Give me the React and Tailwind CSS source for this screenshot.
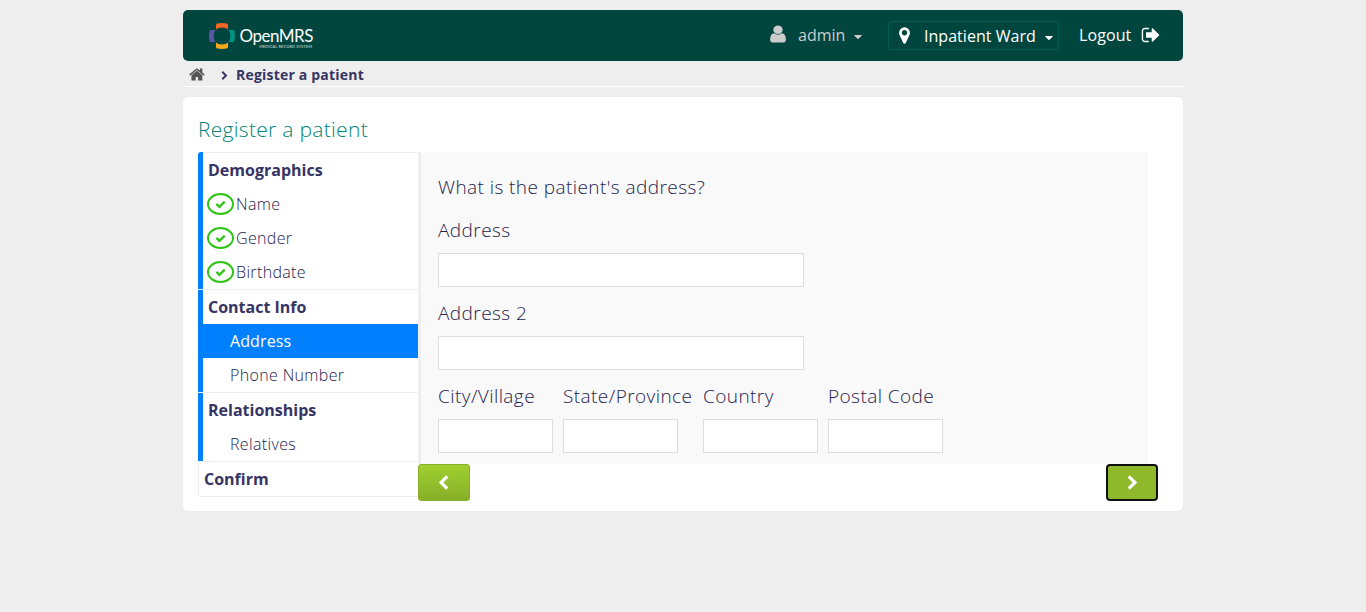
const PATHS = {
  home: "M1408 992v480q0 26-19 45t-45 19h-384v-384h-256v384h-384q-26 0-45-19t-19-45v-480q0-1 .5-3t.5-3l575-474 575 474q1 2 1 6zm223-69l-62 74q-8 9-21 11h-3q-13 0-21-7l-692-577-692 577q-12 8-24 7-13-2-21-11l-62-74q-8-10-7-23.5t11-21.5l719-599q32-26 76-26t76 26l244 204v-195q0-14 9-23t23-9h192q14 0 23 9t9 23v408l219 182q10 8 11 21.5t-7 23.5z",
  marker: "M1152 640q0-106-75-181t-181-75-181 75-75 181 75 181 181 75 181-75 75-181zm256 0q0 109-33 179l-364 774q-16 33-47.5 52t-67.5 19-67.5-19-46.5-52l-365-774q-33-70-33-179 0-212 150-362t362-150 362 150 150 362z",
  user: "M1536 1399q0 109-62.5 187t-150.5 78h-854q-88 0-150.5-78t-62.5-187q0-85 8.5-160.5t31.5-152 58.5-131 94-89 134.5-34.5q131 128 313 128t313-128q76 0 134.5 34.5t94 89 58.5 131 31.5 152 8.5 160.5zm-256-887q0 159-112.5 271.5t-271.5 112.5-271.5-112.5-112.5-271.5 112.5-271.5 271.5-112.5 271.5 112.5 112.5 271.5z",
  check: "M1671 566q0 40-28 68l-724 724-136 136q-28 28-68 28t-68-28l-136-136-362-362q-28-28-28-68t28-68l136-136q28-28 68-28t68 28l294 295 656-657q28-28 68-28t68 28l136 136q28 28 28 68z",
  signout: "M704 1440q0 4 1 20t.5 26.5-3 23.5-10 19.5-20.5 6.5h-320q-119 0-203.5-84.5t-84.5-203.5v-704q0-119 84.5-203.5t203.5-84.5h320q13 0 22.5 9.5t9.5 22.5q0 4 1 20t.5 26.5-3 23.5-10 19.5-20.5 6.5h-320q-66 0-113 47t-47 113v704q0 66 47 113t113 47h312l11.5 1 11.5 3 8 5.5 7 9 2 13.5zm928-544q0 26-19 45l-544 544q-19 19-45 19t-45-19-19-45v-288h-448q-26 0-45-19t-19-45v-384q0-26 19-45t45-19h448v-288q0-26 19-45t45-19 45 19l544 544q19 19 19 45z",
};

function Icon({ name, className }) {
  return (
    <svg viewBox="0 0 1792 1792" preserveAspectRatio="none" fill="currentColor" className={`shrink-0 ${className}`} aria-hidden="true">
      <path d={PATHS[name]} />
    </svg>
  );
}

function Chevron({ right = false, className }) {
  return (
    <svg viewBox="0 0 10 14" fill="none" stroke="currentColor" strokeWidth="3" className={`shrink-0 ${className}`} aria-hidden="true">
      <path d={right ? "M1.5 1.2 7.3 7 1.5 12.8" : "M8.5 1.2 2.7 7l5.8 5.8"} />
    </svg>
  );
}

function Caret({ className }) {
  return (
    <svg viewBox="0 0 8 4" fill="currentColor" className={`h-1 w-2 shrink-0 ${className}`} aria-hidden="true">
      <path d="M.6 0h6.8q.6.2.2.7L4.5 3.7q-.5.4-1 0L.4.7Q0 .2.6 0z" />
    </svg>
  );
}

function Logo() {
  return (
    <div className="ml-[26px] mt-[13px] flex h-[26px] items-start">
      <svg viewBox="0 0 26 26" className="h-[26px] w-[26px] shrink-0" aria-hidden="true">
        <path fill="#f26522" d="M7 2Q7 .6 8.4.5q4.6-.8 9.2 0Q19 .6 19 2v4.6q-1.8-2-6-2t-6 2z" />
        <path fill="#f5a81c" d="M7 24q0 1.3 1.4 1.5 4.6.8 9.2 0Q19 25.3 19 24v-4.6q-1.8 2-6 2t-6-2z" />
        <path fill="#5b57a6" d="M2 7Q.6 7 .5 8.4q-.8 4.6 0 9.2Q.6 19 2 19h4.6q-2-1.8-2-6t2-6z" />
        <path fill="#009384" d="M24 7q1.3 0 1.5 1.4.8 4.6 0 9.2-.2 1.4-1.5 1.4h-4.6q2-1.8 2-6t-2-6z" />
      </svg>
      <div className="ml-[4px] flex w-[74px] flex-col items-end text-white">
        <span className="mt-[3px] font-[Lato] text-[17px] leading-[20px] tracking-[-0.5px]">OpenMRS</span>
        <span className="-mt-px h-[4px] whitespace-nowrap pr-px font-[Lato] text-[4px] leading-[4px] tracking-[0.1px] opacity-80">MEDICAL RECORD SYSTEM</span>
      </div>
    </div>
  );
}

function Heading({ children }) {
  return <div className="h-[34px] pl-[5px] font-bold leading-[34px]">{children}</div>;
}

function DoneItem({ children }) {
  return (
    <div className="flex h-[34px] items-center pl-[4px]">
      <span className="flex h-[22px] w-[27px] items-center justify-center rounded-[50%] border-2 border-[#2dc414] text-[#2dc414]">
        <Icon name="check" className="h-[11px] w-[11px]" />
      </span>
      <span className="ml-[2px] font-light tracking-[0.35px] text-[#24224f]">{children}</span>
    </div>
  );
}

function Item({ children }) {
  return <div className="h-[34px] pl-[27px] font-light leading-[34px] tracking-[0.35px] text-[#24224f]">{children}</div>;
}

function Sidebar() {
  return (
    <nav className="h-[345px] w-[220px] shrink-0 text-[16px]">
      <section className="rounded-tl-[3px] border-l-[5px] border-[#007fff]">
        <div className="h-px bg-[#eee]" />
        <Heading>Demographics</Heading>
        <DoneItem>Name</DoneItem>
        <DoneItem>Gender</DoneItem>
        <DoneItem>Birthdate</DoneItem>
      </section>
      <div className="h-px bg-[#eee]" />
      <section className="border-l-[5px] border-[#007fff]">
        <Heading>Contact Info</Heading>
        <div className="h-[34px] bg-[#007fff] pl-[27px] leading-[34px] tracking-[0.1px] text-white">Address</div>
        <Item>Phone Number</Item>
      </section>
      <div className="h-px bg-[#eee]" />
      <section className="border-l-[5px] border-[#007fff]">
        <Heading>Relationships</Heading>
        <Item>Relatives</Item>
      </section>
      <div className="h-[36px] rounded-bl-[4px] border-y border-l border-[#eee] pl-[5px] font-bold leading-[34px]">Confirm</div>
    </nav>
  );
}

function Field({ label, className, inputClass }) {
  return (
    <label className={`block ${className}`}>
      <span className="block h-[40px] whitespace-nowrap leading-[34px]">{label}</span>
      <input type="text" className={`block h-[34px] border border-[#ddd] bg-white px-2 outline-none ${inputClass}`} />
    </label>
  );
}

export default function App() {
  return (
    <div className="min-h-screen bg-[#eee] pt-[10px] font-['Open_Sans',sans-serif] text-[#363463]">
      <div className="mx-auto w-[1000px]">
        <header className="flex h-[51px] rounded-[5px] bg-[#00463f] text-[16px] text-white">
          <Logo />
          <div className="ml-auto flex h-[50px] items-center text-[#ccc]">
            <Icon name="user" className="mb-[2px] h-[20px] w-[22px]" />
            <span className="ml-[9px] w-[48px]">admin</span>
            <Caret className="ml-[8px] mt-[3px]" />
          </div>
          <div className="ml-[26px] mt-[11px] flex h-[29px] w-[171px] items-center rounded-[3px] border border-[#005b53]">
            <Icon name="marker" className="ml-[6px] h-[19px] w-[19px]" />
            <span className="ml-[10px] w-[113px] whitespace-nowrap tracking-[0.04px]">Inpatient Ward</span>
            <Caret className="ml-[8px] mt-[4px]" />
          </div>
          <div className="ml-[20px] mr-[22px] flex h-[50px] items-center">
            <span className="w-[53px] tracking-[0.1px]">Logout</span>
            <Icon name="signout" className="ml-[9px] h-[20px] w-[20px]" />
          </div>
        </header>

        <div className="flex h-[26px] items-center border-b border-white text-[14px] font-bold">
          <Icon name="home" className="ml-[6px] mt-[1px] h-[17px] w-[17px] text-[#555]" />
          <Chevron right className="ml-[15px] mt-[4px] h-[9px] w-[7px]" />
          <span className="ml-[8px] mt-[2px] tracking-[0.2px]">Register a patient</span>
        </div>

        <main className="mt-[10px] h-[414px] rounded-[5px] bg-white pl-[15px]">
          <h2 className="h-[55px] pt-[15px] text-[21px] font-light leading-[34px] tracking-[0.3px] text-[#008476]">Register a patient</h2>
          <div className="flex">
            <Sidebar />
            <div className="w-[740px]">
              <div className="h-[312px] w-[730px] border-l-[3px] border-[#eee] bg-[#f9f9f9] pl-[17px] pt-[18px] text-[19px] font-light tracking-[0.43px] text-[#24224f]">
                <h3 className="h-[43px] leading-[34px]">What is the patient's address?</h3>
                <Field label="Address" className="h-[83px]" inputClass="w-[366px]" />
                <Field label="Address 2" className="h-[83px]" inputClass="w-[366px]" />
                <div className="flex">
                  <Field label="City/Village" className="w-[125px]" inputClass="w-[115px]" />
                  <Field label="State/Province" className="w-[140px]" inputClass="w-[115px]" />
                  <Field label="Country" className="w-[125px]" inputClass="w-[115px]" />
                  <Field label="Postal Code" className="w-[125px]" inputClass="w-[115px]" />
                </div>
              </div>
              <div className="flex justify-between text-white">
                <button aria-label="Previous" className="flex h-[37px] w-[52px] items-center justify-center rounded-[3px] border border-[#88af28] bg-linear-to-b from-[#9fd030] to-[#88af28] pr-[1px] pb-px">
                  <Chevron className="h-[15px] w-[11px]" />
                </button>
                <button aria-label="Next" className="flex h-[37px] w-[52px] items-center justify-center rounded-[4px] border-2 border-[#101010] bg-[#8fb82b] pb-px">
                  <Chevron right className="h-[15px] w-[11px]" />
                </button>
              </div>
            </div>
          </div>
        </main>
      </div>
    </div>
  );
}
